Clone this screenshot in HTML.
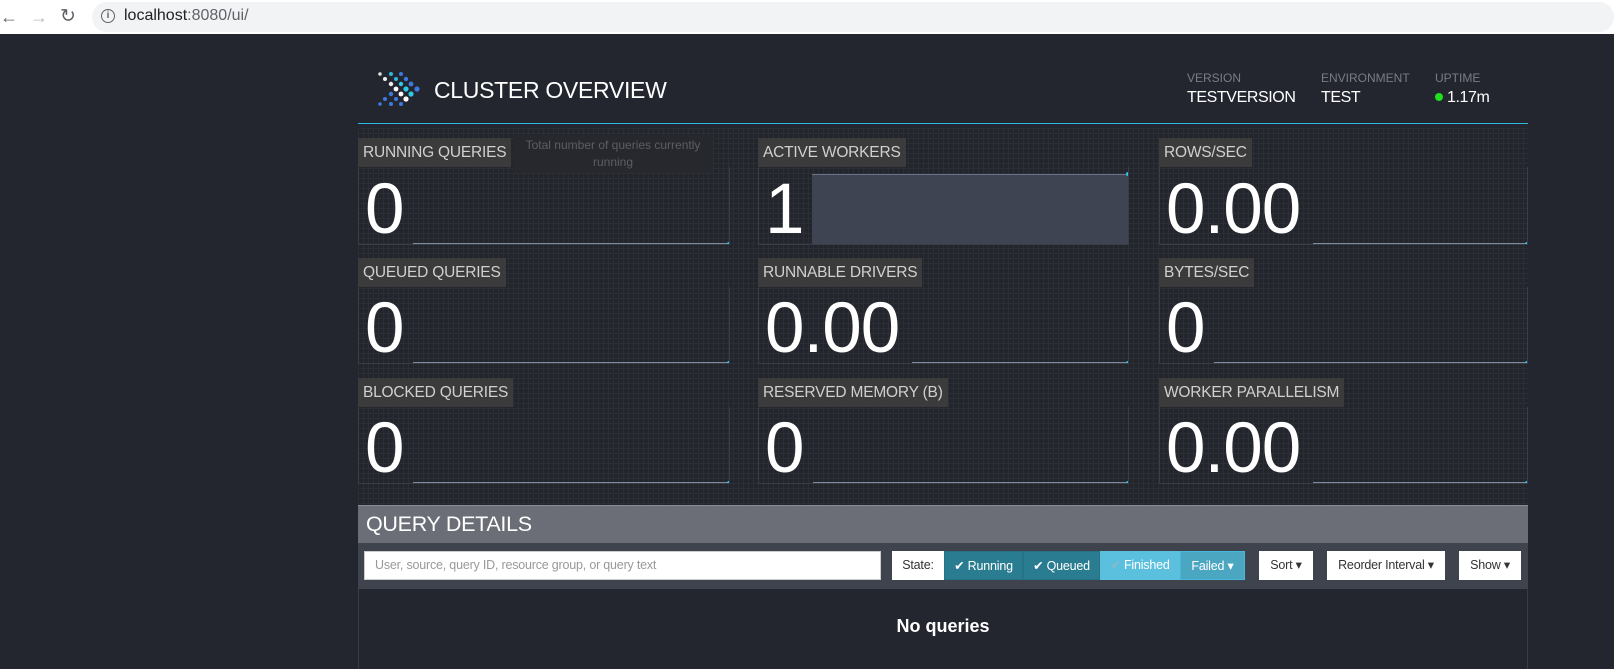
<!DOCTYPE html>
<html><head><meta charset="utf-8"><style>
*{margin:0;padding:0;box-sizing:border-box}
body{width:1614px;height:665px;overflow:hidden;background:#23262e;font-family:"Liberation Sans",sans-serif;position:relative}
.abs{position:absolute}
.chrome{left:0;top:0;width:1614px;height:34px;background:#fff}
.pill{left:92px;top:2px;width:1522px;height:30px;background:#f1f3f4;border-radius:15px}
.url{left:124px;top:7px;font-size:16px;color:#202124}
.grid{left:358px;top:128px;width:1170px;height:377px;background-color:#22252b;
background-image:linear-gradient(#2b2e35 1px,transparent 1px),linear-gradient(90deg,#2b2e35 1px,transparent 1px);background-size:5px 5px}
.lbl{height:29px;background:#3b3b3b;color:#d0d0d0;font-size:15.5px;line-height:29px;padding:0 5px;letter-spacing:-0.2px}
.box{border:1px solid #3a3d44;border-top:none;overflow:hidden}
.num{color:#fff;font-size:71px;line-height:1;position:absolute;left:6px;bottom:-1px;letter-spacing:-1px}
.line{position:absolute;height:1px;background:#7d8aa0;bottom:0}
.dot{position:absolute;width:4px;height:4px;border-radius:2px;background:#2dc2e8}
.meta .k{font-size:12px;color:#7a7d84}
.meta .v{font-size:16px;color:#fff;margin-top:4px;letter-spacing:-0.4px}
.btn{position:absolute;top:551px;height:29px;font-size:12.5px;line-height:29px;text-align:center;letter-spacing:-0.2px}
</style></head><body>
<div class="abs chrome"></div>
<div class="abs pill"></div>
<div class="abs" style="left:0;top:7px;font-size:18px;color:#5f6368">&#8592;</div>
<div class="abs" style="left:30px;top:7px;font-size:18px;color:#bbb">&#8594;</div>
<div class="abs" style="left:60px;top:5px;font-size:19px;color:#5f6368">&#8635;</div>
<div class="abs" style="left:101px;top:9px;width:14px;height:14px;border:1.5px solid #5f6368;border-radius:50%;font-size:10px;line-height:11px;text-align:center;color:#5f6368;font-weight:bold">i</div>
<div class="abs url">localhost<span style="color:#5f6368">:8080/ui/</span></div>

<svg class="abs" style="left:370px;top:66px" width="56" height="46">
<g transform="translate(-370,-66)">
<circle cx="380" cy="74" r="1.8" fill="#ddd"/><circle cx="391" cy="74" r="2" fill="#2db8e0"/><circle cx="401" cy="74" r="2" fill="#3b7be0"/>
<circle cx="385" cy="79" r="2" fill="#eee"/><circle cx="396" cy="79" r="2" fill="#2db8e0"/><circle cx="406" cy="79" r="2.2" fill="#3b7be0"/>
<circle cx="391" cy="84" r="2.2" fill="#eee"/><circle cx="401" cy="84" r="2.2" fill="#2dc8e8"/><circle cx="411" cy="84" r="2.4" fill="#3b7be0"/>
<circle cx="396" cy="89" r="2.4" fill="#fff"/><circle cx="406" cy="89" r="2.6" fill="#2dc8e8"/><circle cx="417" cy="89" r="2.6" fill="#3b7be0"/>
<circle cx="391" cy="94" r="2.2" fill="#3b7be0"/><circle cx="401" cy="94" r="2.4" fill="#fff"/><circle cx="411" cy="94" r="2.6" fill="#2dc8e8"/>
<circle cx="385" cy="99" r="2" fill="#3b7be0"/><circle cx="396" cy="99" r="2" fill="#3b7be0"/><circle cx="406" cy="99" r="2.6" fill="#fff"/>
<circle cx="380" cy="104" r="1.8" fill="#3b7be0"/><circle cx="391" cy="104" r="2" fill="#3b7be0"/><circle cx="401" cy="104" r="2" fill="#3b7be0"/>
</g></svg>
<div class="abs" style="left:434px;top:77px;font-size:23px;color:#fff;letter-spacing:-0.3px">CLUSTER OVERVIEW</div>

<div class="abs meta" style="left:1187px;top:71px"><div class="k">VERSION</div><div class="v">TESTVERSION</div></div>
<div class="abs meta" style="left:1321px;top:71px"><div class="k">ENVIRONMENT</div><div class="v">TEST</div></div>
<div class="abs meta" style="left:1435px;top:71px"><div class="k">UPTIME</div><div class="v"><span style="display:inline-block;width:8px;height:8px;border-radius:4px;background:#1ee01e;margin-right:4px;vertical-align:1px"></span>1.17m</div></div>
<div class="abs" style="left:358px;top:123px;width:1170px;height:1px;background:#2db8e0"></div>

<div class="abs grid"></div>

<div class="abs" style="left:358px;top:138px;width:372px">
<div class="lbl" style="display:inline-block">RUNNING QUERIES</div>
<div class="box" style="position:relative;height:78px"><div class="num">0</div><div class="line" style="left:54px;right:0"></div><div class="dot" style="right:-2px;bottom:-2px"></div></div></div>
<div class="abs" style="left:513px;top:135px;width:200px;height:38px;background:#26282d;color:#5c5e63;font-size:12px;text-align:center;line-height:17px;padding-top:2px">Total number of queries currently running</div>

<div class="abs" style="left:758px;top:138px;width:371px">
<div class="lbl" style="display:inline-block">ACTIVE WORKERS</div>
<div class="box" style="position:relative;height:78px"><div class="abs" style="left:53px;top:7px;right:0;bottom:0;background:#3f4452;border-top:1px solid #6a7488"></div><div class="num">1</div><div class="dot" style="right:-2px;top:5px"></div></div></div>

<div class="abs" style="left:1159px;top:138px;width:369px">
<div class="lbl" style="display:inline-block">ROWS/SEC</div>
<div class="box" style="position:relative;height:78px"><div class="num">0.00</div><div class="line" style="left:153px;right:0"></div><div class="dot" style="right:-2px;bottom:-2px"></div></div></div>

<div class="abs" style="left:358px;top:258px;width:372px">
<div class="lbl" style="display:inline-block">QUEUED QUERIES</div>
<div class="box" style="position:relative;height:77px"><div class="num">0</div><div class="line" style="left:54px;right:0"></div><div class="dot" style="right:-2px;bottom:-2px"></div></div></div>
<div class="abs" style="left:758px;top:258px;width:371px">
<div class="lbl" style="display:inline-block">RUNNABLE DRIVERS</div>
<div class="box" style="position:relative;height:77px"><div class="num">0.00</div><div class="line" style="left:153px;right:0"></div><div class="dot" style="right:-2px;bottom:-2px"></div></div></div>
<div class="abs" style="left:1159px;top:258px;width:369px">
<div class="lbl" style="display:inline-block">BYTES/SEC</div>
<div class="box" style="position:relative;height:77px"><div class="num">0</div><div class="line" style="left:54px;right:0"></div><div class="dot" style="right:-2px;bottom:-2px"></div></div></div>

<div class="abs" style="left:358px;top:378px;width:372px">
<div class="lbl" style="display:inline-block">BLOCKED QUERIES</div>
<div class="box" style="position:relative;height:77px"><div class="num">0</div><div class="line" style="left:54px;right:0"></div><div class="dot" style="right:-2px;bottom:-2px"></div></div></div>
<div class="abs" style="left:758px;top:378px;width:371px">
<div class="lbl" style="display:inline-block">RESERVED MEMORY (B)</div>
<div class="box" style="position:relative;height:77px"><div class="num">0</div><div class="line" style="left:54px;right:0"></div><div class="dot" style="right:-2px;bottom:-2px"></div></div></div>
<div class="abs" style="left:1159px;top:378px;width:369px">
<div class="lbl" style="display:inline-block">WORKER PARALLELISM</div>
<div class="box" style="position:relative;height:77px"><div class="num">0.00</div><div class="line" style="left:153px;right:0"></div><div class="dot" style="right:-2px;bottom:-2px"></div></div></div>

<div class="abs" style="left:358px;top:505px;width:1170px;height:38px;background:#6b6e76;border-top:1px solid #8a8d94;color:#fff;font-size:21.5px;line-height:37px;padding-left:8px;letter-spacing:-0.3px">QUERY DETAILS</div>
<div class="abs" style="left:358px;top:543px;width:1170px;height:46px;background:#3f434e"></div>
<div class="abs" style="left:358px;top:589px;width:1170px;height:80px;border-left:1px solid #3a3d44;border-right:1px solid #3a3d44"></div>
<div class="abs" style="left:364px;top:551px;width:517px;height:29px;background:#fff;border:1px solid #ccc;font-size:12.5px;color:#999;line-height:27px;padding-left:10px;letter-spacing:-0.2px">User, source, query ID, resource group, or query text</div>
<div class="btn" style="left:892px;width:52px;background:#fff;color:#333">State:</div>
<div class="btn" style="left:944px;width:79px;background:#2a7c90;color:#fff;border:1px solid #267385">&#10004; Running</div>
<div class="btn" style="left:1023px;width:77px;background:#2a7c90;color:#fff;border:1px solid #267385">&#10004; Queued</div>
<div class="btn" style="left:1100px;width:80px;background:#5bc0de;color:#fff"><span style="color:#86b9c9">&#10004;</span> Finished</div>
<div class="btn" style="left:1180px;width:65px;background:#4ba6c2;color:#fff;border:1px solid #46b8da">Failed &#9662;</div>
<div class="btn" style="left:1259px;width:54px;background:#fff;color:#333">Sort &#9662;</div>
<div class="btn" style="left:1327px;width:118px;background:#fff;color:#333">Reorder Interval &#9662;</div>
<div class="btn" style="left:1459px;width:62px;background:#fff;color:#333">Show &#9662;</div>
<div class="abs" style="left:358px;top:616px;width:1170px;text-align:center;color:#fff;font-size:18px;font-weight:bold">No queries</div>
</body></html>
